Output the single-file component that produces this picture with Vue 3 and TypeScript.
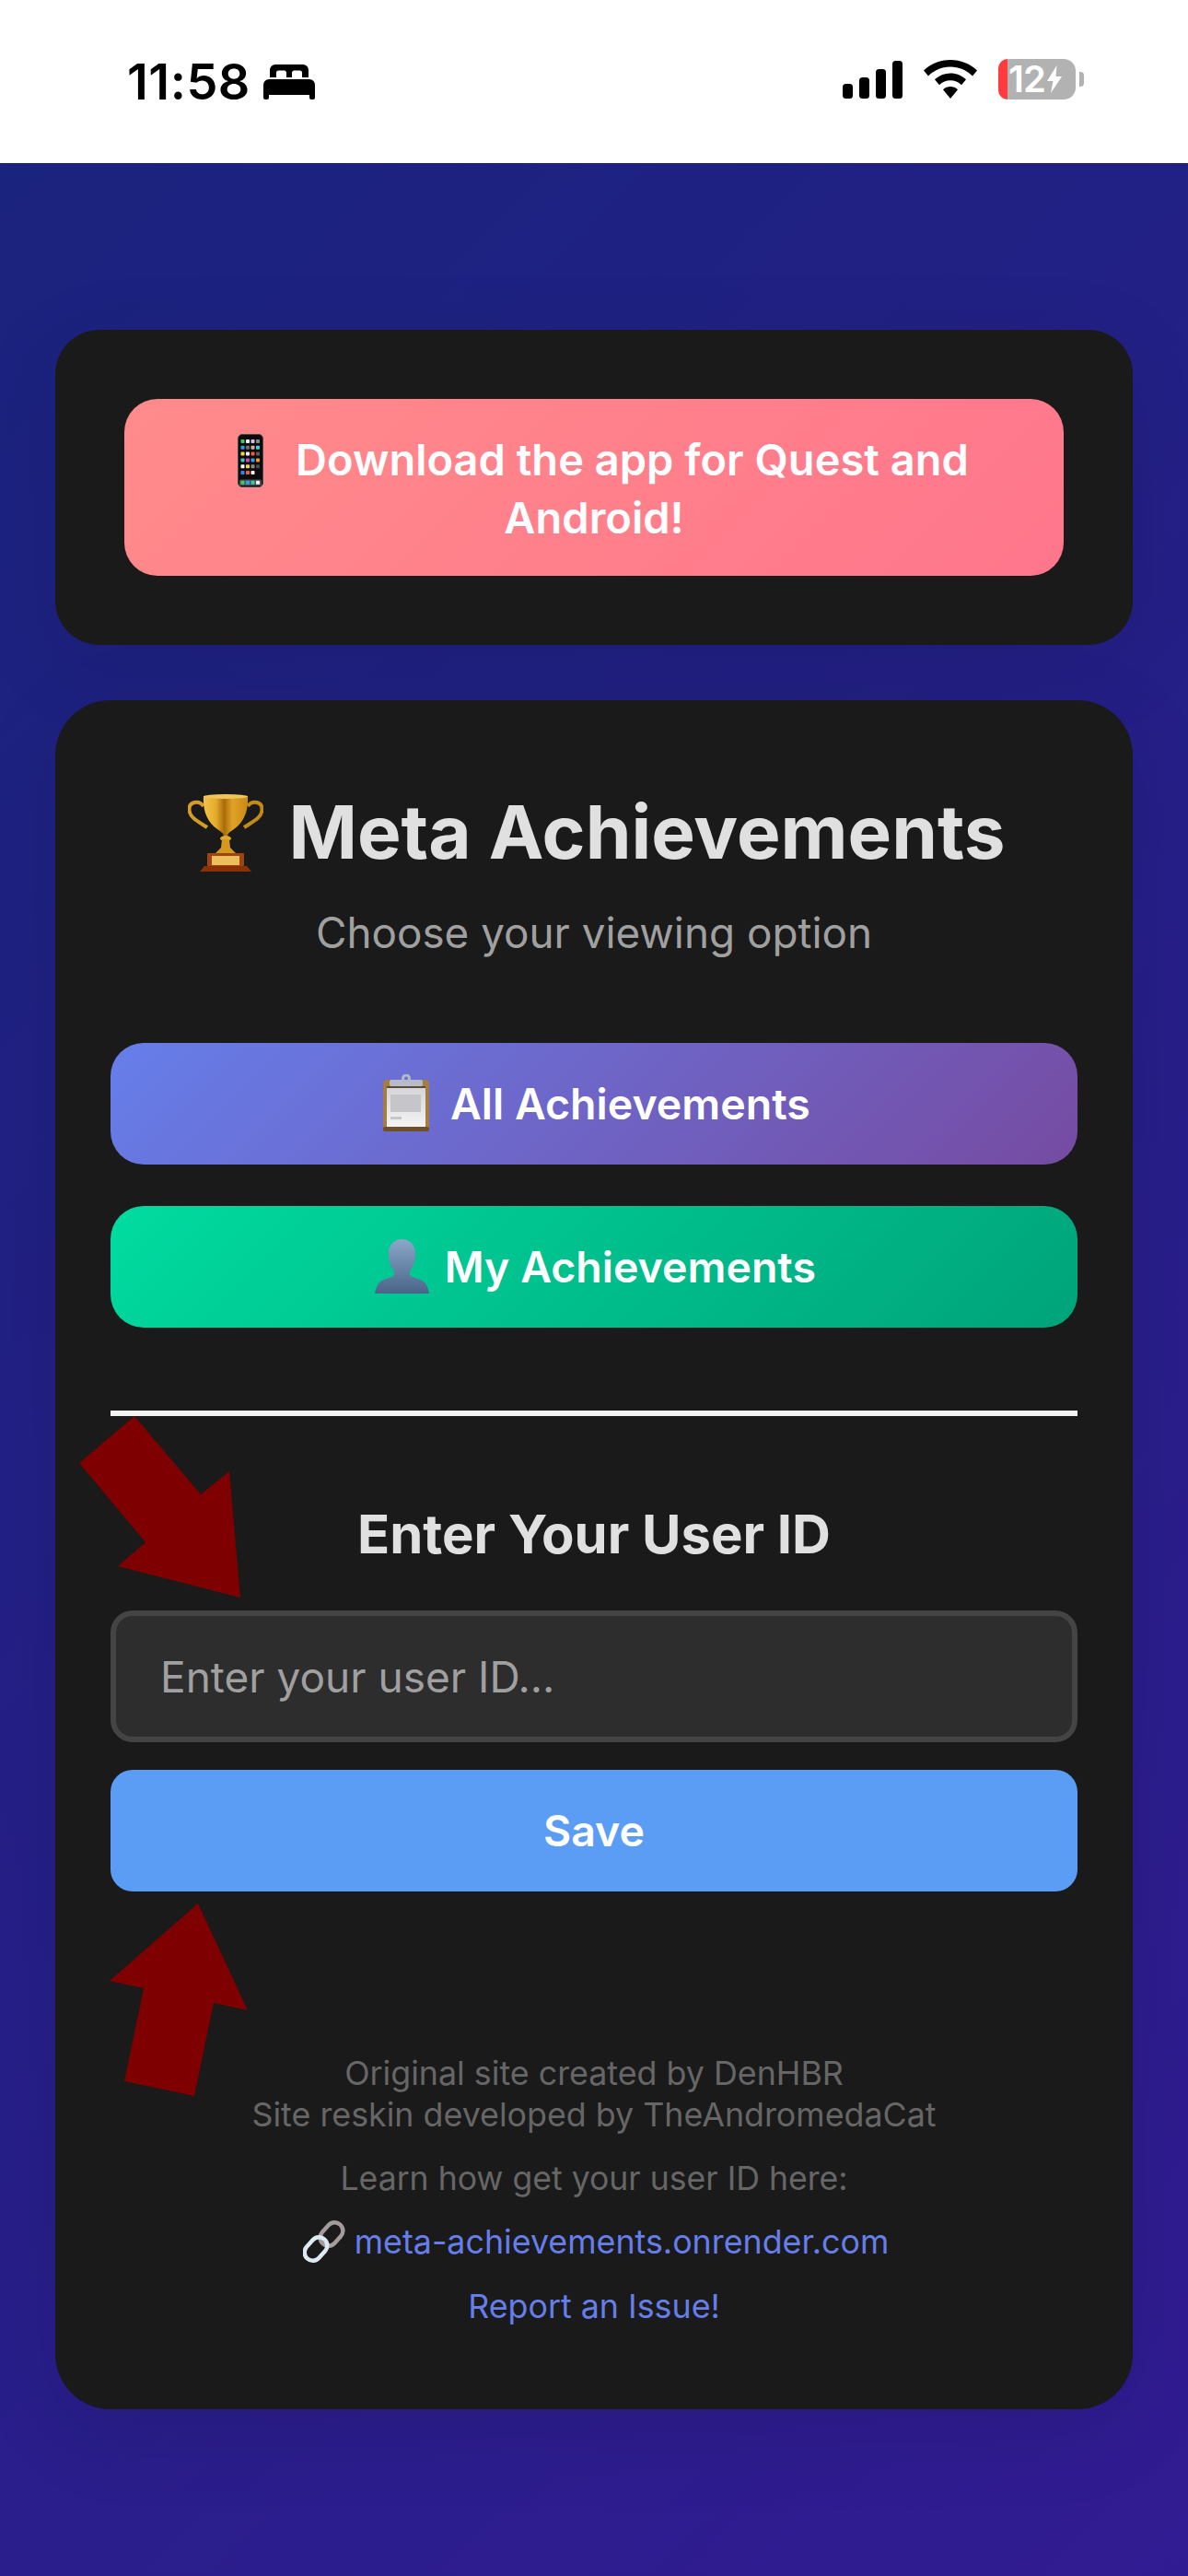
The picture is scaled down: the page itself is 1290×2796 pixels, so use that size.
<script setup lang="ts">
import { ref } from 'vue'

const userId = ref('')

// app grid on the phone emoji, row by row
const phoneApps: string[][] = [
  ['#3fc95f', '#f2f2f2', '#d9b8f0', '#8a8a8a'],
  ['#2a9fe0', '#6f6f6f', '#c9b48e', '#3fd0e8'],
  ['#f7d63c', '#f2f2f2', '#f0584a', '#5c5c5c'],
  ['#35c8c0', '#d83fc4', '#2a9fe8', '#f59a1c'],
  ['#ffffff', '#f7d63c', '#8a8a8a', '#4a4a4a'],
  ['#2f86f0', '#f0584a', '#f2f2f2'],
]
const dockApps = ['#3fc95f', '#3a9cf0', '#3fc98a', '#f2f2f2']
</script>

<template>
  <div class="screen">
    <header class="status-bar">
      <div class="status-left">
        <span class="time">11:58</span>
        <svg class="bed" viewBox="0 0 56 38" width="56" height="38">
          <path d="M7 14V6a6 6 0 0 1 6-6h30a6 6 0 0 1 6 6v8h-7V9a2.500 2.500 0 0 0-2.500-2.500h-6A2.500 2.500 0 0 0 31 9v5h-6V9a2.500 2.500 0 0 0-2.500-2.500h-6A2.500 2.500 0 0 0 14 9v5z" />
          <path d="M6 16h44a6 6 0 0 1 6 6v14a2 2 0 0 1-2 2h-2a2 2 0 0 1-2-2v-3H6v3a2 2 0 0 1-2 2H2a2 2 0 0 1-2-2V22a6 6 0 0 1 6-6z" />
        </svg>
      </div>
      <div class="status-right">
        <svg class="signal" viewBox="0 0 65 41" width="65" height="41">
          <rect x="0" y="25" width="11" height="16" rx="3.500" />
          <rect x="18" y="18" width="11" height="23" rx="3.500" />
          <rect x="36" y="9" width="11" height="32" rx="3.500" />
          <rect x="54" y="0" width="11" height="41" rx="3.500" />
        </svg>
        <svg class="wifi" viewBox="0 0 58 42" width="58" height="42">
          <path d="M29 0c11 0 21 4 29 11.500l-5 6C46.500 11 38 7.500 29 7.500S11.500 11 5 17.500l-5-6C8 4 18 0 29 0z" />
          <path d="M29 14.500c6.500 0 12.500 2.500 17 6.800l-5 6C37.800 24 33.500 22.300 29 22.300S20.200 24 17 27.300l-5-6c4.500-4.300 10.500-6.800 17-6.800z" />
          <path d="M29 29c3 0 5.800 1.200 8 3.200L29 42l-8-9.800c2.200-2 5-3.200 8-3.200z" />
        </svg>
        <div class="battery">
          <div class="battery-body">
            <span class="battery-low"></span>
            <span class="battery-text">12</span>
            <svg class="bolt" viewBox="0 0 16 30" width="16" height="30">
              <path d="M10.500 0 0 17h6.500L4 30 16 12H9.500z" />
            </svg>
          </div>
          <span class="battery-nub"></span>
        </div>
      </div>
    </header>

    <main class="page">
      <section class="card download-card">
        <button class="download-btn">
          <svg class="emoji phone" viewBox="0 0 28 58" width="28" height="58">
            <rect x="0.500" y="0.500" width="27" height="57" rx="4.500" fill="#0c0c0c" stroke="#4a4a4a" />
            <template v-for="(row, r) in phoneApps" :key="r">
              <rect
                v-for="(color, c) in row"
                :key="c"
                :x="3.500 + c * 5.500"
                :y="6 + r * 6.800"
                width="4"
                height="4"
                rx="0.800"
                :fill="color"
              />
            </template>
            <rect x="2" y="49.500" width="24" height="6.500" rx="1.500" fill="#4d5157" />
            <rect
              v-for="(color, c) in dockApps"
              :key="'dock' + c"
              :x="3.500 + c * 5.500"
              y="50.800"
              width="4"
              height="4"
              rx="0.800"
              :fill="color"
            />
          </svg>
          Download the app for Quest and Android!
        </button>
      </section>

      <section class="card main-card">
        <h1 class="title">
          <svg class="emoji trophy" viewBox="0 0 82 84" width="82" height="84">
            <defs>
              <linearGradient id="cup" x1="0" y1="0" x2="1" y2="0">
                <stop offset="0" stop-color="#f3c24a" />
                <stop offset="0.280" stop-color="#e6ac2c" />
                <stop offset="0.470" stop-color="#a86c0a" />
                <stop offset="0.650" stop-color="#e0a226" />
                <stop offset="1" stop-color="#c98a14" />
              </linearGradient>
            </defs>
            <path d="M17 13C12 6 1 8 1.500 17 2 26 12 30 21 36" fill="none" stroke="#d49c24" stroke-width="4" />
            <path d="M65 13c5-7 16-5 15.500 4C80 26 70 30 61 36" fill="none" stroke="#c48a18" stroke-width="4" />
            <path d="M17 2h48c1 16-4 28-15 36-4 3-7 4-7 8h-4c0-4-3-5-7-8C21 30 16 18 17 2z" fill="url(#cup)" />
            <ellipse cx="41" cy="2.500" rx="24" ry="2.500" fill="#f0c65a" />
            <ellipse cx="41" cy="48" rx="6" ry="3" fill="#e0a82e" />
            <path d="M37 49h8l1 9 6 6H30l6-6z" fill="#d3981e" />
            <rect x="21" y="64" width="40" height="14" rx="1" fill="#9c4510" />
            <rect x="26" y="67" width="30" height="10" fill="#ecbe5c" />
            <path d="M18 78h46l5 6H13z" fill="#8a3206" />
          </svg>
          Meta Achievements
        </h1>
        <p class="subtitle">Choose your viewing option</p>

        <div class="nav-buttons">
          <button class="nav-btn all-btn">
            <svg class="emoji clipboard" viewBox="0 0 50 62" width="50" height="62">
              <defs>
                <linearGradient id="sheet" x1="0" y1="0" x2="0" y2="1">
                  <stop offset="0" stop-color="#d5d5da" />
                  <stop offset="1" stop-color="#f4f4f4" />
                </linearGradient>
              </defs>
              <rect x="0" y="6" width="50" height="56" rx="4" fill="#a67c45" />
              <rect x="4" y="14" width="42" height="43" fill="url(#sheet)" />
              <rect x="8" y="22" width="33" height="19" fill="#c6c6ca" />
              <rect x="8" y="46" width="12" height="3" fill="#c6c6ca" />
              <rect x="0" y="57" width="50" height="5" rx="2" fill="#6f4f28" />
              <rect x="7" y="6" width="36" height="7" rx="2" fill="#b9bcc8" />
              <rect x="4" y="13" width="42" height="2" fill="#5b4b3a" />
              <circle cx="25" cy="4.500" r="3.500" fill="none" stroke="#b4b9c8" stroke-width="3" />
            </svg>
            All Achievements
          </button>
          <button class="nav-btn my-btn">
            <svg class="emoji bust" viewBox="0 0 60 60" width="59" height="59">
              <defs>
                <linearGradient id="bust" x1="0" y1="0" x2="0" y2="1">
                  <stop offset="0" stop-color="#8aa8c8" />
                  <stop offset="1" stop-color="#496488" />
                </linearGradient>
              </defs>
              <path d="M30 0c9 0 15 7 15 16 0 7-2 13-5 17-2 3-2 6 0 8 3 2 12 3 16 8 2 3 3 6 4 11H0c1-5 2-8 4-11 4-5 13-6 16-8 2-2 2-5 0-8-3-4-5-10-5-17C15 7 21 0 30 0z" fill="url(#bust)" />
            </svg>
            My Achievements
          </button>
        </div>

        <hr class="divider" />

        <h2 class="id-title">Enter Your User ID</h2>
        <input v-model="userId" class="id-input" type="text" placeholder="Enter your user ID..." />
        <button class="save-btn">Save</button>

        <footer class="credits">
          <p class="credit-lines">Original site created by DenHBR<br />Site reskin developed by TheAndromedaCat</p>
          <p class="learn-line">Learn how get your user ID here:</p>
          <p class="link-line">
            <svg class="emoji chain" viewBox="0 0 46 46" width="46" height="46">
              <g fill="none" stroke-width="4.500">
                <rect x="22" y="1" width="18" height="28" rx="9" transform="rotate(42 31 15)" stroke="#a59a9c" />
                <rect x="5" y="17" width="18" height="28" rx="9" transform="rotate(42 14 31)" stroke="#dcebf2" />
              </g>
            </svg>
            <a class="link">meta-achievements.onrender.com</a>
          </p>
          <p><a class="link">Report an Issue!</a></p>
        </footer>

        <svg class="arrow arrow-input" viewBox="0 0 175 197" width="175" height="197">
          <polygon points="60,0 132,85 163,60 175,197 42,163 72,137 0,51" />
        </svg>
        <svg class="arrow arrow-save" viewBox="0 0 150 209" width="150" height="209">
          <polygon points="96,0 150,116 113,108 92,209 16,193 37,92 0,84" />
        </svg>
      </section>
    </main>
  </div>
</template>

<style scoped>
.screen {
  width: 1290px;
  height: 2796px;
  overflow: hidden;
  display: flex;
  flex-direction: column;
  font-family: Inter, "Liberation Sans", sans-serif;
}

.status-bar {
  height: 177px;
  background: #fff;
  display: flex;
  justify-content: space-between;
  align-items: flex-start;
  padding: 64px 113px 0 138px;
  box-sizing: border-box;
  flex-shrink: 0;
}

.status-left {
  display: flex;
  align-items: center;
  gap: 14px;
  height: 44px;
  margin-top: 3px;
}

.time {
  font-size: 54px;
  font-weight: 600;
  color: #000;
  line-height: 44px;
  letter-spacing: 0.5px;
}

.bed {
  fill: #000;
}

.status-right {
  display: flex;
  align-items: center;
  gap: 23px;
  height: 44px;
}

.signal,
.wifi {
  fill: #000;
}

.battery {
  display: flex;
  align-items: center;
  gap: 4px;
}

.battery-body {
  position: relative;
  width: 84px;
  height: 44px;
  border-radius: 13px;
  background: #b2b2b2;
  display: flex;
  align-items: center;
  gap: 2px;
  color: #fff;
  box-sizing: border-box;
  padding-left: 11px;
}

.battery-low {
  position: absolute;
  left: 0;
  top: 0;
  bottom: 0;
  width: 10px;
  background: #ff3b3f;
  border-radius: 13px 0 0 13px;
}

.battery-text {
  position: relative;
  font-size: 40px;
  font-weight: 600;
  line-height: 44px;
  letter-spacing: -1px;
}

.bolt {
  fill: #fff;
}

.battery-nub {
  width: 5px;
  height: 16px;
  background: #b2b2b2;
  border-radius: 0 4px 4px 0;
}

.page {
  flex: 1;
  background: linear-gradient(135deg, #1a237e, #311b92);
  padding: 181px 60px 0;
  display: flex;
  flex-direction: column;
  gap: 60px;
}

.card {
  background: #1a1a1a;
  box-shadow: 0 24px 96px rgba(0, 0, 0, 0.1);
  box-sizing: border-box;
}

.download-card {
  padding: 75px;
  height: 342px;
  border-radius: 48px;
}

.download-btn {
  width: 100%;
  height: 192px;
  border: none;
  border-radius: 36px;
  background: linear-gradient(135deg, #ff8b8b, #ff768c);
  color: #fff;
  font-family: inherit;
  font-size: 47px;
  font-weight: 600;
  line-height: 59px;
  padding: 2px 60px 0;
  text-align: center;
}

.emoji {
  vertical-align: middle;
}

.phone {
  margin: 0 23px 0 20px;
  position: relative;
  top: -3px;
}

.main-card {
  position: relative;
  height: 1855px;
  padding: 95px 60px 0;
  text-align: center;
  border-radius: 60px;
}

.title {
  margin: 0;
  font-size: 80px;
  font-weight: 700;
  line-height: 96px;
  color: #e0e0e0;
}

.trophy {
  margin: 0 8px 0 6px;
  position: relative;
  top: -6px;
}

.subtitle {
  margin: 31px 0 0;
  font-size: 45.800px;
  line-height: 60px;
  color: #a0a0a0;
}

.nav-buttons {
  margin-top: 89px;
  display: flex;
  flex-direction: column;
  gap: 45px;
}

.nav-btn {
  height: 132px;
  border: none;
  border-radius: 36px;
  color: #fff;
  font-family: inherit;
  font-size: 46.500px;
  font-weight: 600;
  padding: 6px 0 0;
}

.all-btn {
  background: linear-gradient(135deg, #667eea, #764ba2);
}

.my-btn {
  background: linear-gradient(135deg, #00dba0, #00a37a);
}

.clipboard {
  margin: 0 11px 0 6px;
  position: relative;
  top: -5px;
}

.bust {
  margin: 0 5px 0 3px;
  position: relative;
  top: -5px;
}

.divider {
  margin: 90px 0 0;
  border: none;
  height: 6px;
  background: #f2f2f2;
}

.id-title {
  margin: 92px 0 0;
  font-size: 58px;
  font-weight: 700;
  line-height: 72px;
  color: #e0e0e0;
}

.id-input {
  display: block;
  margin-top: 47px;
  width: 100%;
  height: 143px;
  box-sizing: border-box;
  background: #2d2d2d;
  border: 6px solid #444;
  border-radius: 24px;
  padding: 0 48px;
  font-family: inherit;
  font-size: 46px;
  color: #e0e0e0;
  outline: none;
}

.id-input::placeholder {
  color: #a0a0a0;
  opacity: 1;
}

.save-btn {
  display: block;
  margin-top: 30px;
  width: 100%;
  height: 132px;
  border: none;
  border-radius: 24px;
  background: #5b9df5;
  color: #fff;
  font-family: inherit;
  font-size: 46.500px;
  font-weight: 600;
}

.credits {
  margin-top: 175px;
  font-size: 35.800px;
  line-height: 45px;
  color: #666;
}

.credits p {
  margin: 0 0 24px;
}

.credits .learn-line {
  font-size: 35.600px;
}

.credits .link-line {
  margin-bottom: 22px;
}

.link-line .chain {
  margin: 0 10px 0 4px;
  position: relative;
  top: -3px;
}

.link {
  color: #667eea;
}

.arrow {
  position: absolute;
  fill: #7f0000;
}

.arrow-input {
  left: 26px;
  top: 777px;
}

.arrow-save {
  left: 59px;
  top: 1306px;
}
</style>

<style>
body {
  background: #1a237e;
}
</style>
